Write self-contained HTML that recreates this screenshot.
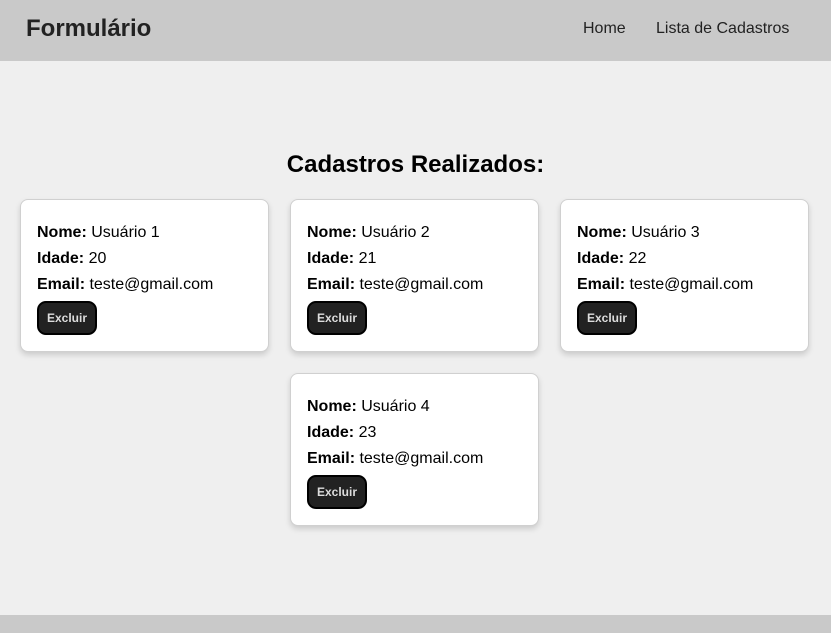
<!DOCTYPE html>
<html><head><meta charset="utf-8"><style>
*{box-sizing:border-box;margin:0;padding:0}
body{width:831px;height:633px;background:#efefef;font-family:"Liberation Sans",Arial,sans-serif;position:relative;overflow:hidden;color:#000}
header{position:absolute;left:0;top:0;width:831px;height:61px;background:#c9c9c9}
header h1{position:absolute;left:26px;top:15px;font-size:24px;font-weight:bold;color:#222}
header nav{position:absolute;top:20px;font-size:16px;color:#222}
h2{position:absolute;top:151px;left:0;width:831px;text-align:center;font-size:24px;font-weight:bold}
.card{position:absolute;width:249px;height:153px;background:#fff;border:1px solid #d0d0d0;border-radius:8px;box-shadow:0 3px 6px rgba(0,0,0,.15);padding:23px 0 0 16px;font-size:16px}
.card p{height:26px;line-height:20px}
.btn{position:absolute;left:16px;top:101px;width:60px;height:34px;background:#222;border:2px solid #000;border-radius:9px;color:#ddd;font-size:12px;font-weight:bold;text-align:center;line-height:30px}
footer{position:absolute;left:0;top:615px;width:831px;height:18px;background:#c9c9c9}
</style></head><body>
<header><h1>Formulário</h1><nav style="left:583px">Home</nav><nav style="left:656px">Lista de Cadastros</nav></header>
<h2>Cadastros Realizados:</h2>
<div class="card" style="left:20px;top:199px"><p><b>Nome:</b> Usuário 1</p><p><b>Idade:</b> 20</p><p><b>Email:</b> teste@gmail.com</p><div class="btn">Excluir</div></div>
<div class="card" style="left:290px;top:199px"><p><b>Nome:</b> Usuário 2</p><p><b>Idade:</b> 21</p><p><b>Email:</b> teste@gmail.com</p><div class="btn">Excluir</div></div>
<div class="card" style="left:560px;top:199px"><p><b>Nome:</b> Usuário 3</p><p><b>Idade:</b> 22</p><p><b>Email:</b> teste@gmail.com</p><div class="btn">Excluir</div></div>
<div class="card" style="left:290px;top:373px"><p><b>Nome:</b> Usuário 4</p><p><b>Idade:</b> 23</p><p><b>Email:</b> teste@gmail.com</p><div class="btn">Excluir</div></div>
<footer></footer>
</body></html>
